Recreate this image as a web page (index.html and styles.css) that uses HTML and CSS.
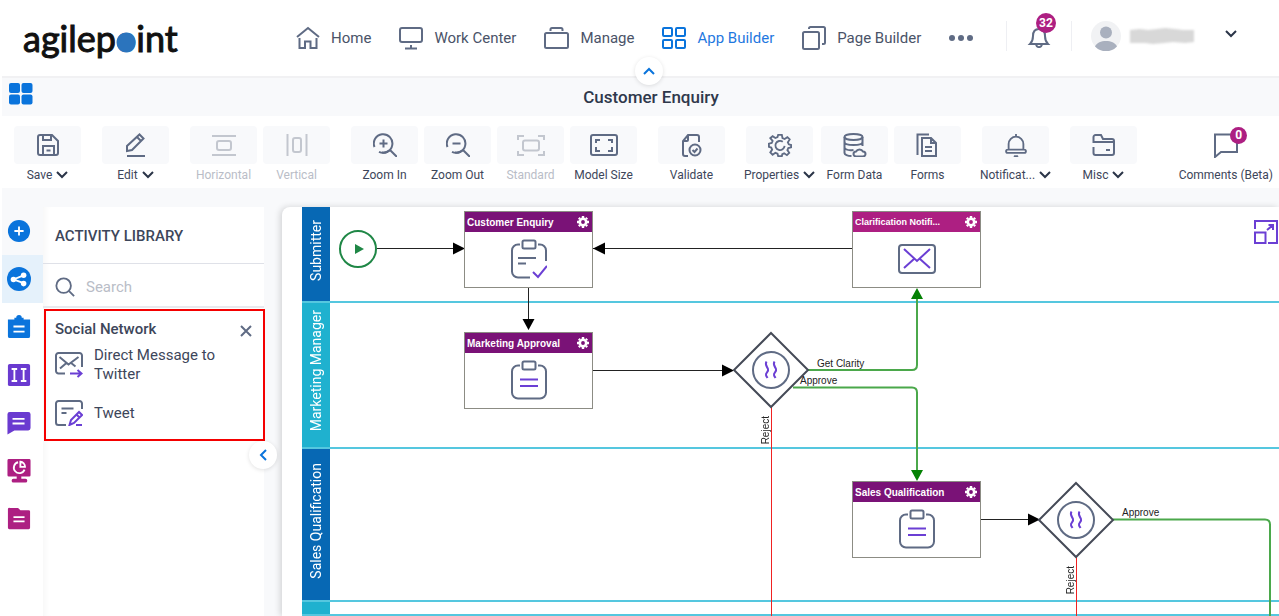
FILE: index.html
```html
<!DOCTYPE html>
<html lang="en">
<head>
<meta charset="utf-8">
<title>Customer Enquiry - App Builder</title>
<link rel="stylesheet" href="styles.css">
</head>
<body>
<svg class="defs" aria-hidden="true">
  <symbol id="chev" viewBox="0 0 12 8"><path d="M1 1l5 5 5-5"/></symbol>
  <symbol id="gear-solid" viewBox="0 0 12 12"><g stroke="#fff"><circle cx="6" cy="6" r="3.200" stroke-width="2.600"/><path stroke-width="2.400" d="M6 0v2M6 10v2M0 6h2M10 6h2M1.800 1.800l1.200 1.200M9 9l1.200 1.200M1.800 10.200L3 9M9 3l1.200-1.200"/></g></symbol>
  <symbol id="clipboard" viewBox="0 0 36 40"><path d="M9 5.500H7a6 6 0 0 0-6 6v21a6 6 0 0 0 6 6h22a6 6 0 0 0 6-6v-21a6 6 0 0 0-6-6h-2"/><rect x="11.500" y="1.500" width="13" height="8" rx="1.500"/><path class="violet" d="M9 19.500h18M9 26h18"/></symbol>
  <symbol id="wave" viewBox="0 0 38 38"><circle cx="19" cy="19" r="18"/><path class="violet" d="M13.500 10.500c-2 3 .5 5 1.500 7.500s-2.500 4-2 6 1 2 1.500 3M21.500 10.500c-2 3 .5 5 1.500 7.500s-2.500 4-2 6 1 2 1.500 3" transform="translate(1)"/></symbol>
</svg>
<div class="page">
  <header class="header">
    <a class="logo" href="#" aria-label="agilepoint">agilep<span class="logo-dot">o</span>int</a>
    <nav class="nav" aria-label="Main">
      <a href="#"><svg class="icon" viewBox="0 0 24 24"><path d="M1 11L12 2l11 9M3.500 12v10h5.500v-6.500h5.500V22H20.500V12"/></svg>Home</a>
      <a href="#"><svg class="icon" viewBox="0 0 24 24"><rect x="1" y="2" width="22" height="14" rx="2"/><path d="M12 19v3M6 22.500h12"/></svg>Work Center</a>
      <a href="#"><svg class="icon wide" viewBox="0 0 25 24"><rect x="1" y="7" width="23" height="15" rx="1.500"/><path d="M6.500 5V3.500a1.500 1.500 0 0 1 1.500-1.500h9a1.500 1.500 0 0 1 1.500 1.500V5"/></svg>Manage</a>
      <a href="#" class="active" aria-current="page"><svg class="icon" viewBox="0 0 24 24"><rect x="1" y="2" width="9" height="8" rx="1"/><rect x="14" y="2" width="9" height="8" rx="1"/><rect x="1" y="14" width="9" height="8" rx="1"/><rect x="14" y="14" width="9" height="8" rx="1"/></svg>App Builder</a>
      <a href="#"><svg class="icon" viewBox="0 0 24 24"><rect x="1" y="6" width="16" height="17" rx="1.500"/><path d="M7 3V2.500A1.500 1.500 0 0 1 8.500 1h13A1.500 1.500 0 0 1 23 2.500v14a1.500 1.500 0 0 1-1.500 1.500H20"/></svg>Page Builder</a>
      <a href="#" aria-label="More"><svg class="icon" viewBox="0 0 24 24"><g fill="#5f6b84" stroke="none"><circle cx="3" cy="12" r="3"/><circle cx="12" cy="12" r="3"/><circle cx="21" cy="12" r="3"/></g></svg></a>
    </nav>
    <div class="account">
      <button class="bell" aria-label="Notifications"><svg class="icon" viewBox="0 0 24 24"><path d="M3 20c2-2 3-4 3-8 0-4 2-7 6-7s6 3 6 7c0 4 1 6 3 8zM9 20.500c1 3.500 5 3.500 6 0"/></svg><span class="badge">32</span></button>
      <button class="user" aria-label="Account menu">
        <svg class="avatar" viewBox="0 0 30 30"><circle cx="15" cy="15" r="15" fill="#f1f2f4"/><circle cx="15" cy="11.500" r="6" fill="#a9b0be"/><path fill="#a9b0be" d="M4 25.500c2-4 6-5.500 11-5.500s9 1.500 11 5.500a15 15 0 0 1-22 0z"/></svg>
        <svg class="redacted" viewBox="0 0 66 16"><path fill="#d8d8d8" d="M1 2l10-1 8 1 9-1 8-1 10 1 8 1 11 0v12l-9 1-12-1-9 1-11 1-8-1-15 0z"/></svg>
        <svg class="chev" viewBox="0 0 12 8"><use href="#chev"/></svg>
      </button>
    </div>
    <button class="round fold-up" aria-label="Hide header"><svg class="chev up" viewBox="0 0 12 8"><use href="#chev"/></svg></button>
  </header>

  <div class="titlebar">
    <button class="tiles" aria-label="All apps"><svg viewBox="0 0 24 22"><g fill="#0a74dc"><rect width="11" height="10" rx="2"/><rect x="12.500" width="11" height="10" rx="2"/><rect y="11.500" width="11" height="10" rx="2"/><rect x="12.500" y="11.500" width="11" height="10" rx="2"/></g></svg></button>
    <h1>Customer Enquiry</h1>
  </div>

  <div class="toolbar" role="toolbar" aria-label="Model tools">
    <div class="group">
      <button class="tool"><span class="tile"><svg viewBox="0 0 24 24"><path d="M4 2h12l6 6v12a2 2 0 0 1-2 2H4a2 2 0 0 1-2-2V4a2 2 0 0 1 2-2zM7 2v5h8V2M7 22v-9h11v9M10.500 17.500h4"/></svg></span><span class="label">Save<svg class="chev" viewBox="0 0 12 8"><use href="#chev"/></svg></span></button>
    </div>
    <div class="group">
      <button class="tool"><span class="tile"><svg viewBox="0 0 24 24"><path d="M3 18v-5L15.500 1.500l4 4L8 17zM13 4l4 4M3 23h18"/></svg></span><span class="label">Edit<svg class="chev" viewBox="0 0 12 8"><use href="#chev"/></svg></span></button>
    </div>
    <div class="group">
      <button class="tool" disabled><span class="tile"><svg viewBox="0 0 24 24"><path d="M0 3h24M0 22h24"/><rect x="5" y="8" width="14" height="9" rx="2"/></svg></span><span class="label">Horizontal</span></button>
      <button class="tool" disabled><span class="tile"><svg viewBox="0 0 24 24"><path d="M2.500 1v22M21.500 1v22"/><rect x="8" y="5" width="8" height="14" rx="2"/></svg></span><span class="label">Vertical</span></button>
    </div>
    <div class="group">
      <button class="tool"><span class="tile"><svg viewBox="0 0 24 24"><path d="M1.500 14A9.300 9.300 0 1 1 6 18.800M10.500 6.500v8M6.500 10.500h8M17.500 17.500L24 24"/><path d="M9 19.500a9.300 9.300 0 0 0 8-2.500"/></svg></span><span class="label">Zoom In</span></button>
      <button class="tool"><span class="tile"><svg viewBox="0 0 24 24"><path d="M1.500 14A9.300 9.300 0 1 1 6 18.800M6.500 10.500h8M17.500 17.500L24 24"/><path d="M9 19.500a9.300 9.300 0 0 0 8-2.500"/></svg></span><span class="label">Zoom Out</span></button>
      <button class="tool" disabled><span class="tile"><svg class="wide" viewBox="0 0 28 24"><path d="M1 7V3h6M21 3h6v4M1 18v4h6M21 22h6v-4"/><rect x="6" y="7.500" width="16" height="10" rx="2"/></svg></span><span class="label">Standard</span></button>
      <button class="tool"><span class="tile"><svg class="wide" viewBox="0 0 28 24"><rect x="1" y="2" width="26" height="20" rx="2"/><path d="M6 10V7h4M18 7h4v3M6 14v4h4M18 18h4v-4"/></svg></span><span class="label">Model Size</span></button>
    </div>
    <div class="group">
      <button class="tool"><span class="tile"><svg viewBox="0 0 24 24"><path d="M8 23H5a2 2 0 0 1-2-2V8l5-6h9a2 2 0 0 1 2 2v5M3 8h4a1 1 0 0 0 1-1V2"/><circle cx="15" cy="17" r="5.500"/><path d="M12.500 17l2 2 3-3.500"/></svg></span><span class="label">Validate</span></button>
    </div>
    <div class="group group-data">
      <button class="tool"><span class="tile"><svg viewBox="0 0 26 26"><path d="M11 2h4l.7 3.500 2.300 1 3-2 2.500 2.500-2 3 1 2.300L25 13v2.500l-3 .8-1 2.200 2 3-2.500 2.500-3-2-2 1L15 25h-4l-.7-2.500-2.300-1-3 2L2.500 21l2-3-1-2.200L1 15v-3.500l3-.8 1-2.200-2.500-3L5 3.500l3 2 2.300-1z"/><path d="M16 9.500a5 5 0 1 0 2 4.500"/></svg></span><span class="label">Properties<svg class="chev" viewBox="0 0 12 8"><use href="#chev"/></svg></span></button>
      <button class="tool"><span class="tile"><svg viewBox="0 0 24 24"><ellipse cx="10.500" cy="4" rx="9" ry="3"/><path d="M1.500 4v16c0 1.500 3 3 7 3M19.500 4v9M1.500 9c0 4 18 4 18 0M1.500 14.500c1 2.500 5 3 9 2.500M13 23.500h7a2.500 2.500 0 0 0 0-5 4 4 0 0 0-7 0 2.500 2.500 0 0 0 0 5z"/></svg></span><span class="label">Form Data</span></button>
      <button class="tool"><span class="tile"><svg viewBox="0 0 24 24"><path d="M1.500 22V1.500H13M6 5h9l5 5v13H6zM15 5v5h5M9 14h7M9 18h7"/></svg></span><span class="label">Forms</span></button>
    </div>
    <div class="group">
      <button class="tool"><span class="tile"><svg viewBox="0 0 24 26"><path d="M12 1v3M4 18v-6a8 8 0 0 1 16 0v6M3 18h18a1.500 1.500 0 0 1 0 3.500H3A1.500 1.500 0 0 1 3 18zM10 24.500c1 1.200 3 1.200 4 0"/></svg></span><span class="label">Notificat...<svg class="chev" viewBox="0 0 12 8"><use href="#chev"/></svg></span></button>
    </div>
    <div class="group">
      <button class="tool"><span class="tile"><svg viewBox="0 0 24 24"><path d="M1.500 10V4a2 2 0 0 1 2-2H9l2 4h9a2 2 0 0 1 2 2v12a2 2 0 0 1-2 2H3.500a2 2 0 0 1-2-2v-6M2 9h20M14 17h4"/></svg></span><span class="label">Misc<svg class="chev" viewBox="0 0 12 8"><use href="#chev"/></svg></span></button>
    </div>
    <button class="tool comments"><span class="tile"><svg viewBox="0 0 26 26"><path d="M2 2.500h22V20H8l-6 5z"/></svg><span class="badge small">0</span></span><span class="label">Comments (Beta)</span></button>
  </div>

  <main class="workspace">
    <nav class="rail" aria-label="Activity groups">
      <button class="first" aria-label="Add"><svg viewBox="0 0 26 26"><circle cx="13" cy="13" r="12" fill="#0a74dc"/><path class="on" d="M8 13h10M13 8v10"/></svg></button>
      <button class="active" aria-label="Social"><svg viewBox="0 0 26 26"><circle cx="13" cy="13" r="13" fill="#0a74dc"/><path class="on" d="M18 9L7 13.500l11 4"/><g fill="#fff"><circle cx="18" cy="9" r="3"/><circle cx="7" cy="13.500" r="3"/><circle cx="18" cy="18" r="3"/></g></svg></button>
      <button aria-label="Tasks"><svg viewBox="0 0 26 26"><path fill="#0a74dc" d="M1 5H8V3h2a3 3 0 0 1 6 0h2v2h7v18a2 2 0 0 1-2 2h-20a2 2 0 0 1-2-2z"/><path class="on" d="M7 12.500h12M7 18h12"/></svg></button>
      <button aria-label="Flow control"><svg viewBox="0 0 26 26"><rect x="1" y="1" width="24" height="24" rx="2" fill="#6a3ad0"/><path class="on" d="M5 6.500h6M8 6.500v13M5 19.500h6M15 6.500h6M18 6.500v13M15 19.500h6"/></svg></button>
      <button aria-label="Messages"><svg viewBox="0 0 26 26"><path fill="#6a3ad0" d="M3 1h20a2.500 2.500 0 0 1 2.500 2.500v15A2.500 2.500 0 0 1 23 21H8l-7.500 4.500v-22A2.500 2.500 0 0 1 3 1z"/><path class="on" d="M6 8.500h13M6 13.500h13"/></svg></button>
      <button aria-label="Reports"><svg viewBox="0 0 26 26"><path fill="#ad1f82" d="M2 0h22a1.500 1.500 0 0 1 1.500 1.500v16A1.500 1.500 0 0 1 24 19h-8.500v2.500H20a2 2 0 0 1 0 4H7a2 2 0 0 1 0-4h3.500V19H2a1.500 1.500 0 0 1-1.500-1.500v-16A1.500 1.500 0 0 1 2 0z"/><path class="on" d="M12 3.500a6 6 0 1 0 7 8M14.500 3v5.500h5a5.500 5.500 0 0 0-5-5.500z"/></svg></button>
      <button aria-label="Documents"><svg viewBox="0 0 26 26"><path fill="#ad1f82" d="M3 1h9l2.500 2.500h9a1.500 1.500 0 0 1 1.500 1.500v17.500a1.500 1.500 0 0 1-1.500 1.500H2.500a1.500 1.500 0 0 1-1.500-1.500v-20A1.500 1.500 0 0 1 3 1z"/><path class="on" d="M7 11h12M7 15.500h12"/></svg></button>
    </nav>

    <aside class="library">
      <h2>ACTIVITY LIBRARY</h2>
      <label class="search"><svg viewBox="0 0 22 22"><circle cx="9.500" cy="9.500" r="8"/><path d="M15.500 15.500L21 21"/></svg><input type="search" placeholder="Search" aria-label="Search activities"></label>
      <section class="category">
        <div class="category-head"><h3>Social Network</h3><button aria-label="Close"><svg viewBox="0 0 12 12"><path d="M1 1l10 10M11 1L1 11"/></svg></button></div>
        <ul>
          <li><svg viewBox="0 0 28 26"><path d="M10 21.500H3.500A2.500 2.500 0 0 1 1 19V3.500A2.500 2.500 0 0 1 3.500 1h21A2.500 2.500 0 0 1 27 3.500V15M5 16.500l7-6M4.500 5l9 7.500L23.500 5M15.500 10.500l5 4"/><path class="violet" d="M15 21.500h11M22.500 18l4 3.500-4 3.500"/></svg>Direct Message to Twitter</li>
          <li><svg viewBox="0 0 28 26"><path d="M11 25H3.500A2.500 2.500 0 0 1 1 22.500v-19A2.500 2.500 0 0 1 3.500 1h21A2.500 2.500 0 0 1 27 3.500V9M6.500 8.500h12M6.500 13h5"/><path class="violet" d="M14.500 25l1.500-5 8-8 3 3-8 8zM21.500 14.500l3 3M21 25h6"/></svg>Tweet</li>
        </ul>
      </section>
      <button class="round fold-left" aria-label="Hide library"><svg class="chev left" viewBox="0 0 12 8"><use href="#chev"/></svg></button>
    </aside>

    <section class="canvas" aria-label="Process model">
      <div class="lanes">
        <div class="lane"><span>Submitter</span></div>
        <div class="lane teal"><span>Marketing Manager</span></div>
        <div class="lane"><span>Sales Qualification</span></div>
        <div class="lane teal"></div>
      </div>
      <svg class="edges" aria-hidden="true">
        <g class="black"><path d="M95 41.500H172M311 41.500H571M246.500 80V113M311 163.500H441M699 312.500H747"/></g>
        <g class="heads"><path d="M183 41.500l-12-6v12zM311 41.500l12-6v12zM246.500 123l-6-11h12zM452 163.500l-12-6v12zM758 312.500l-12-6v12z"/></g>
        <g class="green"><path d="M526 163H630q5 0 5-5V92M511 180.500H630q5 0 5 5V264M831 312.500H983q5 0 5 5V900"/></g>
        <g class="green-heads"><path d="M635 81l-6 11h12zM635 274l-6-11h12z"/></g>
        <g class="red"><path d="M489.500 200V900M794.500 350V900"/></g>
        <g class="diamond"><path d="M489 126l37 37-37 37-37-37zM794 276l37 37-37 37-37-37z"/></g>
        <circle class="start" cx="76" cy="42" r="18"/><path class="start-arrow" d="M73 37l9 5-9 5z"/>
      </svg>
      <svg class="gate gate-marketing" viewBox="0 0 38 38"><use href="#wave"/></svg>
      <svg class="gate gate-sales" viewBox="0 0 38 38"><use href="#wave"/></svg>

      <article class="node node-enquiry"><header>Customer Enquiry<svg viewBox="0 0 12 12"><use href="#gear-solid"/></svg></header>
        <svg class="art" viewBox="0 0 36 40"><path d="M9 5.500H7a6 6 0 0 0-6 6v21a6 6 0 0 0 6 6h12M27 5.500h2a6 6 0 0 1 6 6V22M7 19h18M7 24.500h8"/><rect x="11.500" y="1.500" width="13" height="8" rx="1.500"/><path class="violet" d="M22 33l5 5 9-11"/></svg></article>
      <article class="node node-marketing"><header>Marketing Approval<svg viewBox="0 0 12 12"><use href="#gear-solid"/></svg></header>
        <svg class="art" viewBox="0 0 36 40"><use href="#clipboard"/></svg></article>
      <article class="node node-clarify magenta"><header>Clarification Notifi...<svg viewBox="0 0 12 12"><use href="#gear-solid"/></svg></header>
        <svg class="art mail" viewBox="0 0 38 30"><rect x="1" y="1" width="36" height="28" rx="3"/><path class="violet" d="M6 5l13 12L32 5M6 24l10-9M22 15l10 9"/></svg></article>
      <article class="node node-sales"><header>Sales Qualification<svg viewBox="0 0 12 12"><use href="#gear-solid"/></svg></header>
        <svg class="art" viewBox="0 0 36 40"><use href="#clipboard"/></svg></article>

      <span class="edge-label clarity">Get Clarity</span>
      <span class="edge-label approve-marketing">Approve</span>
      <span class="edge-label approve-sales">Approve</span>
      <span class="edge-label upright reject-marketing">Reject</span>
      <span class="edge-label upright reject-sales">Reject</span>
      <button class="expand" aria-label="Full screen"><svg viewBox="0 0 24 24"><path d="M1 9V1h22v22h-9M1 12.500h10.500V23H1zM13 10l6-5M14.500 5H19v5"/></svg></button>
    </section>
  </main>
</div>
</body>
</html>
```
FILE: styles.css
```css
* { box-sizing: border-box; }
body { margin: 0; background: #fff; color: #3d465a; font-family: Roboto, "Liberation Sans", sans-serif; }
h1, h2, h3, ul { margin: 0; padding: 0; }
ul { list-style: none; }
a { color: inherit; text-decoration: none; }
button { border: 0; padding: 0; margin: 0; background: none; color: inherit; font: inherit; cursor: pointer; }
svg { display: block; flex: none; fill: none; stroke: #5f6b84; stroke-width: 2; }
.defs { position: absolute; width: 0; height: 0; }
.violet { stroke: #6b3fd4; }
.on { stroke: #fff; }

.page { display: flex; flex-direction: column; height: 100vh; min-height: 480px; padding-left: 2px; overflow: hidden; }

.header { position: relative; display: flex; align-items: center; height: 78px; padding: 0 42px 0 21px; border-bottom: 2px solid #f1f1f3; flex: none; }
.logo { width: 153px; margin-right: 120px; color: #111; font-family: Lato, sans-serif; font-size: 36px; line-height: 40px; white-space: nowrap; -webkit-text-stroke: 1px currentColor; }
.logo-dot { border-radius: 50%; color: #2b74bd; background: radial-gradient(circle at 50% 60%, #2b74bd 9px, transparent 10px); }
.nav { display: flex; align-items: center; gap: 28px; font-size: 15px; color: #4a5368; white-space: nowrap; }
.nav a { display: flex; align-items: center; gap: 11px; }
.icon { width: 24px; height: 24px; }
.icon.wide { width: 25px; }
.nav .active { color: #1f78e0; }
.nav .active svg { stroke: #0a74dc; }
.account { display: flex; align-items: center; margin-left: auto; padding-bottom: 4px; }
.bell { position: relative; padding: 3px 20px; border: solid #eeeff3; border-width: 0 1px; }
.badge { position: absolute; right: 15px; top: -8px; width: 20px; height: 20px; border-radius: 50%; background: #ad1f82; color: #fff; font-size: 12px; font-weight: 700; line-height: 20px; text-align: center; }
.user { display: flex; align-items: center; margin-left: 19px; }
.avatar { width: 30px; height: 30px; stroke: none; }
.redacted { width: 66px; height: 16px; margin: 0 30px 0 8px; stroke: none; filter: blur(1px); }
.chev { width: 12px; height: 8px; stroke: #2b3548; }
.user .chev { margin-bottom: 4px; }
.round { position: absolute; display: grid; place-items: center; width: 28px; height: 28px; border-radius: 50%; background: #fff; box-shadow: 0 1px 4px #0000001f; z-index: 2; }
.round .chev { stroke: #0a74dc; }
.fold-up { left: calc(50% - 6px); top: 57px; }
.up { transform: rotate(180deg); }
.left { transform: rotate(90deg); }

.titlebar { display: grid; grid-template-columns: 30px 1fr; align-items: center; height: 38px; padding-left: 7px; background: #f8f9fb; flex: none; }
.tiles svg { width: 24px; height: 22px; stroke: none; }
.tiles { padding-bottom: 6px; }
h1 { padding-right: 16px; color: #2f384b; font-size: 17px; font-weight: 500; text-align: center; }

.toolbar { display: flex; align-items: flex-start; gap: 21px; height: 72px; padding: 10px 6px 0 12px; flex: none; }
.group { display: flex; gap: 6px; }
.tool { display: flex; flex-direction: column; align-items: center; width: 67px; font-size: 12px; color: #3d465a; }
.group-data .tool:first-child { margin-right: 2px; }
.tile { position: relative; display: grid; place-items: center; width: 67px; height: 38px; border-radius: 4px; background: #f8f9fb; }
.tile svg { width: 24px; height: 24px; }
.tile .wide { width: 28px; }
.label { display: flex; align-items: center; gap: 4px; padding-top: 3px; line-height: 16px; white-space: nowrap; }
.tool:disabled { color: #b9bdc7; }
.tool:disabled svg { stroke: #c3c7cf; }
.comments { width: auto; margin-left: auto; }
.comments .tile { background: none; }
.comments .tile svg { width: 26px; height: 26px; }
.badge.small { right: 12px; top: 1px; width: 17px; height: 17px; line-height: 17px; }

.workspace { display: flex; flex: 1; min-height: 0; padding-top: 19px; background: #f8f9fb; }
.rail { display: flex; flex-direction: column; width: 41px; background: #fff; }
.rail button { display: grid; place-items: center; height: 48px; padding-right: 7px; }
.rail .first { background: #f8f9fb; }
.rail .active { background: #e5f1fb; }
.rail svg { width: 24px; height: 24px; stroke: none; }
.rail .on { stroke: #fff; }
.library { position: relative; width: 221px; margin-right: 18px; background: #fff; box-shadow: inset 6px 0 6px -4px #0000000a; }
h2 { height: 57px; padding-left: 12px; border-bottom: 1px solid #dfe1e8; font-size: 15px; font-weight: 500; line-height: 58px; }
.search { display: flex; align-items: center; gap: 11px; height: 44px; padding: 4px 12px 0; border-bottom: 2px solid #e8e9ee; }
.search svg { width: 20px; height: 20px; }
.search input { width: 100%; min-width: 0; padding: 0; border: 0; outline: 0; background: none; color: #3d465a; font: 15px Roboto, sans-serif; }
.search input::placeholder { color: #b9bdc7; }
.category { width: 221px; height: 132px; margin: 1px 0 0 1px; padding: 6px 11px 0 9px; border: 2px solid #f40000; }
.category-head { display: flex; justify-content: space-between; align-items: center; height: 24px; }
h3 { font-size: 15px; font-weight: 500; }
.category-head svg { width: 12px; height: 12px; }
.category-head button { padding-top: 3px; }
.category li { display: flex; align-items: center; gap: 11px; margin-bottom: 11px; padding-top: 5px; font-size: 15px; line-height: 19px; }
.category li svg { width: 28px; height: 26px; }
.fold-left { right: -13px; top: 234px; }

.canvas { position: relative; flex: 1; min-width: 0; overflow: hidden; border-top-left-radius: 8px; background: #fff; box-shadow: -2px 0 6px #00000026; }
.lanes { display: grid; grid-template-rows: 96px 146px 153px 1fr; height: 100%; padding-left: 20px; }
.lane { display: flex; align-items: center; padding-bottom: 8px; border-bottom: 2px solid #55c7df; color: #fff; font-size: 14px; line-height: 28px; background: linear-gradient(#0768b4, #0768b4) left / 28px 100% no-repeat; }
.lane span { writing-mode: vertical-rl; transform: rotate(180deg); }
.lane.teal { background-image: linear-gradient(#1fb1cf, #1fb1cf); }
.edges { position: absolute; inset: 0; width: 100%; height: 100%; stroke-width: 1; }
.black { stroke: #222; }
.heads { fill: #000; stroke: none; }
.green { stroke: #4ba84b; stroke-width: 2; }
.green-heads { fill: #058205; stroke: none; }
.red { stroke: #f02222; }
.diamond { fill: #fff; stroke: #454a57; stroke-width: 2; }
.start { stroke: #1f8746; stroke-width: 2; }
.start-arrow { fill: #1f8746; stroke: none; }
.gate { position: absolute; width: 38px; height: 38px; }
.gate-marketing { left: 470px; top: 144px; }
.gate-sales { left: 775px; top: 294px; }
.node { position: absolute; display: grid; grid-template-rows: 20px 1fr; place-items: center; width: 129px; height: 77px; padding-bottom: 1px; border: 1px solid #8c8c84; background: #fff; }
.node header { display: flex; align-items: center; justify-content: space-between; width: 100%; height: 20px; padding: 0 3px 0 2px; background: #7a1277; color: #fff; font: bold 10px "Liberation Sans", sans-serif; white-space: nowrap; }
.node header svg { width: 12px; height: 12px; }
.magenta header { background: #ad1f82; font-size: 9px; }
.art { width: 36px; height: 40px; }
.art.mail { width: 38px; height: 30px; }
.node-enquiry { left: 182px; top: 4px; }
.node-marketing { left: 182px; top: 125px; }
.node-clarify { left: 570px; top: 4px; }
.node-sales { left: 570px; top: 274px; }
.edge-label { position: absolute; color: #222; font: 10px/12px "Liberation Sans", sans-serif; }
.upright { writing-mode: vertical-rl; transform: rotate(180deg); }
.clarity { left: 535px; top: 151px; }
.approve-marketing { left: 518px; top: 168px; }
.approve-sales { left: 840px; top: 300px; }
.reject-marketing { left: 478px; top: 209px; }
.reject-sales { left: 783px; top: 359px; }
.expand { position: absolute; right: 1px; top: 13px; }
.expand svg { width: 24px; height: 24px; stroke: #6b3fd4; }
```
